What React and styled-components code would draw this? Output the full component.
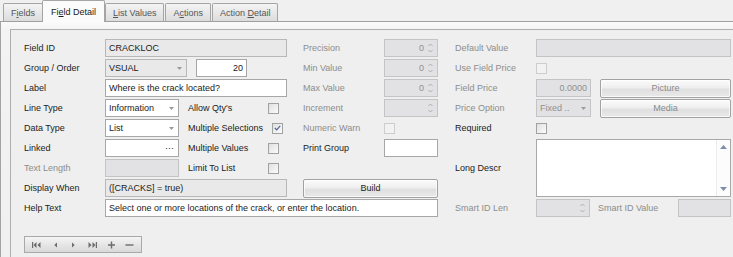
import React from 'react';
import styled, { createGlobalStyle, css } from 'styled-components';

const GlobalStyle = createGlobalStyle`
  html, body {
    margin: 0;
    padding: 0;
    height: 100%;
    overflow: hidden;
    background: #f0f0f0;
  }

  body {
    font-family: "Liberation Sans", Arial, sans-serif;
    font-size: 9px;
    color: #1f1f1f;
  }
`;

const Window = styled.div`
  display: flex;
  flex-direction: column;
  width: 733px;
  height: 257px;
`;

const TabStrip = styled.div`
  display: flex;
  align-items: flex-end;
  gap: 1px;
  height: 22px;
  box-sizing: border-box;
  padding-left: 3px;
  border-bottom: 1px solid #9f9f9f;
`;

const Tab = styled.div`
  display: flex;
  align-items: center;
  box-sizing: border-box;
  height: ${p => (p.$active ? 22 : 18)}px;
  padding: 0 ${p => (p.$active ? 8 : 7)}px;
  margin: ${p => (p.$active ? '0 -1px -1px -2px' : '0')};
  border: 1px solid #a5a5a5;
  border-bottom: none;
  border-radius: 2px 2px 0 0;
  color: ${p => (p.$active ? '#1a1a1a' : '#555')};
  background: ${p => (p.$active ? '#fbfbfb' : 'linear-gradient(#f4f4f4, #dcdcdc)')};
  position: relative;
  z-index: ${p => (p.$active ? 1 : 0)};
  white-space: pre;
`;

const TabPage = styled.div`
  flex: 1;
  display: flex;
  padding: 7px 0 0 9px;
  border-left: 1px solid #a3a3a3;
  background: linear-gradient(#fafafa, #f3f3f3 8px, #f0f0f0);
`;

const Panel = styled.div`
  flex: 1;
  padding: 8px 0 0 13px;
  border-top: 1px solid #aeaeae;
  border-left: 1px solid #aeaeae;
  background: #eeefee;
`;

const Form = styled.div`
  display: flex;
  gap: 17px;
`;

const LeftArea = styled.div`
  display: flex;
  flex-direction: column;
  width: 414px;
`;

const Columns = styled.div`
  display: flex;
  gap: 16px;
`;

const Column = styled.div`
  display: flex;
  flex-direction: column;
  width: ${p => p.$width}px;
`;

const Row = styled.div`
  display: grid;
  grid-template-columns: ${p => (p.$label ? `${p.$label}px 1fr` : '1fr')};
  align-items: center;
  height: ${p => p.$height || 20}px;
`;

const Label = styled.span`
  color: ${p => (p.$disabled ? '#8d8d8d' : '#222')};
  white-space: nowrap;
`;

const Inline = styled.div`
  display: flex;
  align-items: center;
  gap: ${p => p.$gap || 0}px;
  padding-right: ${p => p.$pad || 0}px;
`;

const boxVariants = {
  normal: css`
    background: #fff;
    border-color: #a7a7a7;
    color: #1a1a1a;
  `,
  readonly: css`
    background: #e9e9e9;
    border-color: #b7b7b7;
    color: #1a1a1a;
  `,
  disabled: css`
    background: #e2e2e5;
    border-color: #c4c4c7;
    color: #8f8f8f;
  `,
};

const Box = styled.div`
  display: flex;
  align-items: center;
  justify-content: ${p => (p.$right ? 'flex-end' : 'space-between')};
  gap: 4px;
  box-sizing: border-box;
  width: ${p => (p.$width ? `${p.$width}px` : '100%')};
  flex: none;
  height: 18px;
  padding: 0 ${p => (p.$padRight ?? 3)}px 0 3px;
  border: 1px solid;
  white-space: nowrap;
  overflow: hidden;
  ${p => boxVariants[p.$variant || 'normal']}
`;

const ArrowSvg = styled.svg`
  flex: none;
  margin-right: 3px;
`;

const ComboArrow = () => (
  <ArrowSvg width="5" height="3" viewBox="0 0 5 3">
    <path d="M0 0h5L2.5 3z" fill="#9a9a9a" />
  </ArrowSvg>
);

const SpinArrows = () => (
  <ArrowSvg width="5" height="10" viewBox="0 0 5 10">
    <path d="M0.5 3L2.5 1L4.5 3" stroke="#a8a8a8" fill="none" strokeWidth="0.9" />
    <path d="M0.5 7L2.5 9L4.5 7" stroke="#a8a8a8" fill="none" strokeWidth="0.9" />
  </ArrowSvg>
);

const Combo = ({ value, variant, width }) => (
  <Box $variant={variant} $width={width} $padRight={1}>
    <span>{value}</span>
    <ComboArrow />
  </Box>
);

const Spinner = ({ value, width }) => (
  <Box $variant="disabled" $width={width} $right $padRight={1}>
    <span>{value}</span>
    <SpinArrows />
  </Box>
);

const CheckBox = styled.span`
  display: inline-flex;
  align-items: center;
  justify-content: center;
  flex: none;
  width: 11px;
  height: 11px;
  box-sizing: border-box;
  border: 1px solid ${p => (p.$disabled ? '#cdcdcd' : '#a2a2a2')};
  background: ${p => (p.$disabled ? '#f2f2f2' : 'linear-gradient(135deg, #e0e0e0, #fbfbfb)')};
`;

const Check = ({ checked, disabled }) => (
  <CheckBox $disabled={disabled}>
    {checked && (
      <svg width="7" height="6" viewBox="0 0 7 6">
        <path d="M0.8 3L2.7 4.8L6.2 0.8" stroke="#56698f" strokeWidth="1.2" fill="none" />
      </svg>
    )}
  </CheckBox>
);

const CheckLabel = styled(Label)`
  flex: 1;
`;

const Button = styled.div`
  display: flex;
  align-items: center;
  justify-content: center;
  box-sizing: border-box;
  flex: ${p => (p.$grow ? 1 : 'none')};
  height: 19px;
  border: 1px solid #a2a2a2;
  border-radius: 2px;
  color: ${p => (p.$disabled ? '#8a8a8a' : '#1f1f1f')};
  background: linear-gradient(#fbfbfb, #efefef 45%, #e0e0e0 55%, #e9e9e9);
  box-shadow: inset 0 0 0 1px rgba(255, 255, 255, 0.7);
`;

const MemoBox = styled.div`
  display: flex;
  justify-content: flex-end;
  box-sizing: border-box;
  height: 58px;
  border: 1px solid #a8a8a8;
  background: #fff;
`;

const ScrollBar = styled.div`
  display: flex;
  flex-direction: column;
  justify-content: space-between;
  align-items: center;
  width: 14px;
  padding: 5px 0;
  box-sizing: border-box;
  border-left: 1px solid #ececec;
  background: #fcfcfc;
`;

const Navigator = styled.div`
  display: flex;
  align-items: center;
  width: 118px;
  height: 17px;
  box-sizing: border-box;
  margin-top: 18px;
  padding: 0 2px;
  border: 1px solid #a9a9a9;
  background: linear-gradient(#f5f5f5, #e6e6e6 50%, #d9d9d9);
`;

const NavButton = styled.span`
  display: flex;
  align-items: center;
  justify-content: center;
  width: 19px;
  height: 100%;
`;

const navIcons = {
  first: 'M0 1h1.2v6H0zM4.5 1v6L1.5 4zM8.5 1v6L5.5 4z',
  prev: 'M6 1.5v5L3.3 4z',
  next: 'M3 1.5v5L5.7 4z',
  last: 'M7.8 1H9v6H7.8zM0.5 1v6L3.5 4zM4.5 1v6L7.5 4z',
  add: 'M3.8 0.5h1.4v2.8H8v1.4H5.2v2.8H3.8V4.7H1V3.3h2.8z',
  remove: 'M0.5 3.3h8v1.4h-8z',
};

const NavIcon = ({ name }) => (
  <NavButton>
    <svg width="9" height="8" viewBox="0 0 9 8">
      <path d={navIcons[name]} fill="#6c6c6c" />
    </svg>
  </NavButton>
);

const App = () => (
  <>
    <GlobalStyle />
    <Window>
      <TabStrip>
        <Tab><span>F<u>i</u>elds</span></Tab>
        <Tab $active><span>Fi<u>e</u>ld Detail</span></Tab>
        <Tab><span><u>L</u>ist Values</span></Tab>
        <Tab><span>A<u>c</u>tions</span></Tab>
        <Tab><span>Action <u>D</u>etail</span></Tab>
      </TabStrip>
      <TabPage>
        <Panel>
          <Form>
            <LeftArea>
              <Columns>
                <Column $width={263}>
                  <Row $label={81}>
                    <Label>Field ID</Label>
                    <Box $variant="readonly">CRACKLOC</Box>
                  </Row>
                  <Row $label={81}>
                    <Label>Group / Order</Label>
                    <Inline $gap={9}>
                      <Combo value="VSUAL" variant="readonly" width={82} />
                      <Box $width={51} $right>20</Box>
                    </Inline>
                  </Row>
                  <Row $label={81}>
                    <Label>Label</Label>
                    <Box>Where is the crack located?</Box>
                  </Row>
                  <Row $label={81}>
                    <Label>Line Type</Label>
                    <Inline $gap={9} $pad={8}>
                      <Combo value="Information" width={74} />
                      <CheckLabel>Allow Qty's</CheckLabel>
                      <Check />
                    </Inline>
                  </Row>
                  <Row $label={81}>
                    <Label>Data Type</Label>
                    <Inline $gap={9} $pad={8}>
                      <Combo value="List" width={74} />
                      <CheckLabel>Multiple Selections</CheckLabel>
                      <Check checked />
                    </Inline>
                  </Row>
                  <Row $label={81}>
                    <Label>Linked</Label>
                    <Inline $gap={9} $pad={8}>
                      <Box $width={74} $padRight={4}>
                        <span />
                        <span>···</span>
                      </Box>
                      <CheckLabel>Multiple Values</CheckLabel>
                      <Check />
                    </Inline>
                  </Row>
                  <Row $label={81}>
                    <Label $disabled>Text Length</Label>
                    <Inline $gap={9} $pad={8}>
                      <Box $variant="disabled" $width={74} />
                      <CheckLabel>Limit To List</CheckLabel>
                      <Check />
                    </Inline>
                  </Row>
                  <Row $label={81}>
                    <Label>Display When</Label>
                    <Box $variant="readonly">([CRACKS] = true)</Box>
                  </Row>
                </Column>
                <Column $width={135}>
                  <Row $label={81}>
                    <Label $disabled>Precision</Label>
                    <Spinner value="0" />
                  </Row>
                  <Row $label={81}>
                    <Label $disabled>Min Value</Label>
                    <Spinner value="0" />
                  </Row>
                  <Row $label={81}>
                    <Label $disabled>Max Value</Label>
                    <Spinner value="0" />
                  </Row>
                  <Row $label={81}>
                    <Label $disabled>Increment</Label>
                    <Spinner value="" />
                  </Row>
                  <Row $label={81}>
                    <Label $disabled>Numeric Warn</Label>
                    <Inline>
                      <Check disabled />
                    </Inline>
                  </Row>
                  <Row $label={81}>
                    <Label>Print Group</Label>
                    <Box />
                  </Row>
                  <Row />
                  <Row>
                    <Button>Build</Button>
                  </Row>
                </Column>
              </Columns>
              <Row $label={81}>
                <Label>Help Text</Label>
                <Box>Select one or more locations of the crack, or enter the location.</Box>
              </Row>
              <Navigator>
                <NavIcon name="first" />
                <NavIcon name="prev" />
                <NavIcon name="next" />
                <NavIcon name="last" />
                <NavIcon name="add" />
                <NavIcon name="remove" />
              </Navigator>
            </LeftArea>
            <Column $width={276}>
              <Row $label={81}>
                <Label $disabled>Default Value</Label>
                <Box $variant="disabled" />
              </Row>
              <Row $label={81}>
                <Label $disabled>Use Field Price</Label>
                <Inline>
                  <Check disabled />
                </Inline>
              </Row>
              <Row $label={81}>
                <Label $disabled>Field Price</Label>
                <Inline $gap={9}>
                  <Box $variant="disabled" $width={55} $right>0.0000</Box>
                  <Button $grow $disabled>Picture</Button>
                </Inline>
              </Row>
              <Row $label={81}>
                <Label $disabled>Price Option</Label>
                <Inline $gap={9}>
                  <Combo value="Fixed .." variant="disabled" width={55} />
                  <Button $grow $disabled>Media</Button>
                </Inline>
              </Row>
              <Row $label={81}>
                <Label>Required</Label>
                <Inline>
                  <Check />
                </Inline>
              </Row>
              <Row $label={81} $height={60}>
                <Label>Long Descr</Label>
                <MemoBox>
                  <ScrollBar>
                    <svg width="7" height="4" viewBox="0 0 7 4">
                      <path d="M0 4L3.5 0L7 4z" fill="#7b8da9" />
                    </svg>
                    <svg width="7" height="4" viewBox="0 0 7 4">
                      <path d="M0 0h7L3.5 4z" fill="#7b8da9" />
                    </svg>
                  </ScrollBar>
                </MemoBox>
              </Row>
              <Row $label={81}>
                <Label $disabled>Smart ID Len</Label>
                <Inline $gap={8}>
                  <Spinner value="" width={54} />
                  <CheckLabel $disabled>Smart ID Value</CheckLabel>
                  <Box $variant="disabled" $width={53} />
                </Inline>
              </Row>
            </Column>
          </Form>
        </Panel>
      </TabPage>
    </Window>
  </>
);

export default App;
